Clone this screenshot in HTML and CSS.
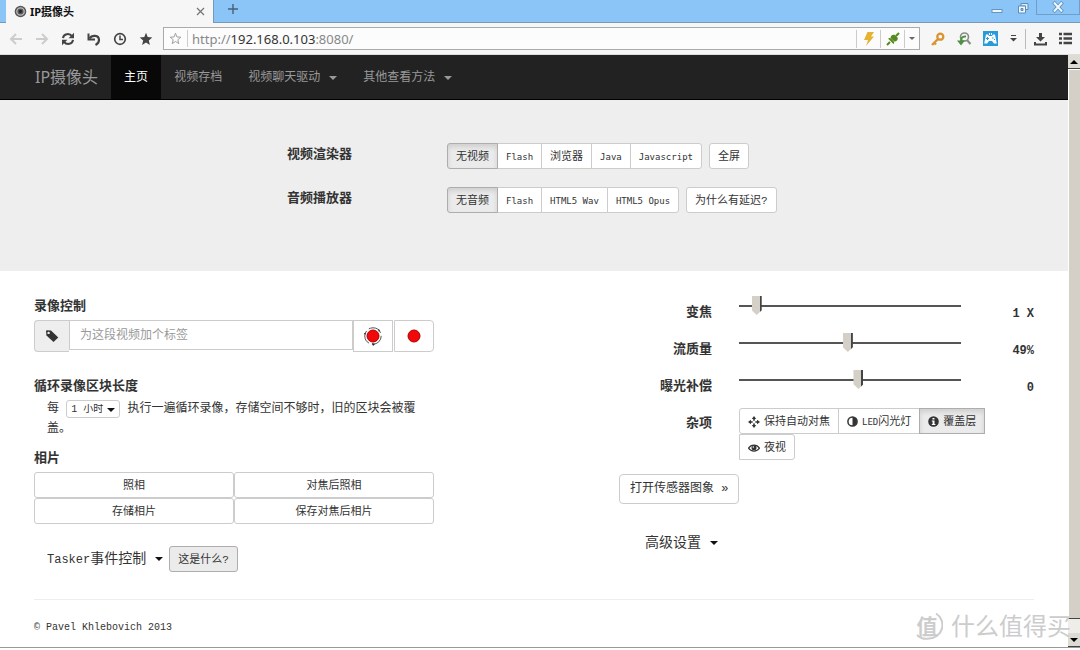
FILE: index.html
```html
<!DOCTYPE html>
<html lang="zh-CN">
<head>
<meta charset="utf-8">
<title>IP摄像头</title>
<link rel="stylesheet" href="styles.css">
</head>
<body>
<div class="tabbar">
  <div class="tab">
    <svg class="favicon" viewBox="0 0 14 14"><circle cx="7" cy="7" r="6.2" fill="#555"/><circle cx="7" cy="7" r="4" fill="none" stroke="#bbb" stroke-width="1.4"/><circle cx="7" cy="7" r="1.6" fill="#222"/></svg>
    <span class="tab-title">IP摄像头</span>
    <button class="plain" aria-label="关闭标签"><svg width="9" height="9" viewBox="0 0 9 9"><path d="M1 1l7 7M8 1L1 8" stroke="#777" stroke-width="1.3"/></svg></button>
  </div>
  <button class="plain newtab" aria-label="新标签"><svg width="10" height="10" viewBox="0 0 10 10"><path d="M5 0v10M0 5h10" stroke="#46607a" stroke-width="1.4"/></svg></button>
  <div class="window-controls">
    <button class="plain" aria-label="最小化"><svg width="12" height="12" viewBox="0 0 12 12"><rect x="1" y="7.5" width="10" height="3" fill="#eef7ff" stroke="#6894bb"/></svg></button>
    <button class="plain" aria-label="还原"><svg width="12" height="12" viewBox="0 0 12 12"><path d="M4 1.500h7v6H8.500V4H4z" fill="#d9edff" stroke="#5f8db6"/><path d="M1.500 4h7v7h-7z" fill="#eef7ff" stroke="#5f8db6"/><path d="M4 6.500h2v2H4z" fill="#8bc5f8" stroke="#5f8db6"/></svg></button>
    <button class="plain close" aria-label="关闭"><svg width="12" height="12" viewBox="0 0 12 12"><path d="M1.500 1l9 10M10.500 1l-9 10" stroke="#5f8db6" stroke-width="3.600"/><path d="M2 1.500l8 9M10 1.500l-8 9" stroke="#eef7ff" stroke-width="2"/></svg></button>
  </div>
</div>
<div class="toolbar">
  <div class="tools">
    <button class="plain" aria-label="后退"><svg width="14" height="14" viewBox="0 0 14 14"><path d="M13 7H3M7 2L2 7l5 5" fill="none" stroke="#ccc" stroke-width="2"/></svg></button>
    <button class="plain" aria-label="前进"><svg width="14" height="14" viewBox="0 0 14 14"><path d="M1 7h10M7 2l5 5-5 5" fill="none" stroke="#ccc" stroke-width="2"/></svg></button>
    <button class="plain" aria-label="刷新"><svg width="14" height="14" viewBox="0 0 14 14"><path d="M2 6.200C2.500 1.500 8.500.800 11 4.200M12 7.800C11.500 12.500 5.500 13.200 3 9.800" fill="none" stroke="#444" stroke-width="2"/><path d="M13 .800v5.400H7.600zM1 13.200V7.800h5.400z" fill="#444"/></svg></button>
    <button class="plain" aria-label="撤销"><svg width="14" height="14" viewBox="0 0 14 14"><path d="M2.500 6.500C5 2.500 12 3 12 8c0 2.500-1.500 4-3.500 5" fill="none" stroke="#444" stroke-width="2.200"/><path d="M1.500 1.500v6H8" fill="none" stroke="#444" stroke-width="2"/></svg></button>
    <button class="plain" aria-label="历史"><svg width="14" height="14" viewBox="0 0 14 14"><circle cx="7" cy="7" r="5.300" fill="none" stroke="#444" stroke-width="1.700"/><path d="M7 3.500V7.500h3" fill="none" stroke="#444" stroke-width="1.500"/></svg></button>
    <button class="plain" aria-label="书签"><svg width="14" height="14" viewBox="0 0 14 14"><path d="M7 .800l1.700 4.300 4.600.300-3.500 3 1.100 4.600L7 10.500 3.100 13l1.100-4.600-3.500-3 4.600-.300z" fill="#444"/></svg></button>
  </div>
  <div class="address">
    <button class="plain star" aria-label="收藏"><svg width="13" height="13" viewBox="0 0 14 14"><path d="M7 1.300l1.500 4 4.300.300-3.300 2.700 1.100 4.200L7 10.200l-3.600 2.300 1.100-4.200-3.300-2.700 4.300-.300z" fill="none" stroke="#999"/></svg></button>
    <span class="url">http://<b>192.168.0.103</b>:8080/</span>
    <button class="plain cell" aria-label="极速模式"><svg width="12" height="14" viewBox="0 0 12 14"><path d="M4.500 0H11L8 4.500h3L3 14l2-6H1z" fill="#e5b331"/></svg></button>
    <button class="plain cell" aria-label="插件"><svg width="14" height="14" viewBox="0 0 14 14"><path d="M1 13l3-3M10 4l3-3" stroke="#548a1e" stroke-width="2"/><path d="M2 6.500l5.500 5.500C9 10.500 8 9.500 6.500 8S4 5 2 6.500zM4.500 6C4.500 3 7.500 2 9 3l2.500 2.500C12.500 7 11 9.500 8.500 9.500z" fill="#548a1e"/></svg></button>
    <button class="plain cell narrow" aria-label="更多"><i class="caret grey"></i></button>
  </div>
  <div class="addons">
    <button class="plain" aria-label="密码"><svg width="14" height="14" viewBox="0 0 14 14"><circle cx="9.300" cy="4.700" r="3" fill="none" stroke="#d9932f" stroke-width="2.300"/><path d="M7 7l-6 6M3 10.500l2 2" stroke="#d9932f" stroke-width="2.300"/></svg></button>
    <button class="plain" aria-label="搜索"><svg width="14" height="14" viewBox="0 0 14 14"><circle cx="7.500" cy="5" r="4" fill="none" stroke="#8a8a8a" stroke-width="1.600"/><path d="M10 8l3.500 4" stroke="#8a8a8a" stroke-width="2"/><path d="M9 4.500C4.500 4 4 7 4 9" fill="none" stroke="#4a9440" stroke-width="2"/><path d="M0 8.500h8L4 13.500z" fill="#4a9440"/></svg></button>
    <button class="plain" aria-label="游戏"><svg width="15" height="15" viewBox="0 0 15 15"><path d="M0 0h15v15H0z" fill="#299bdb"/><path d="M3 3.500h2l1 1.500h3l1-1.500h2l1.800 9H11L9 10H6l-2 2.500H1.200zM6 2h1v2H6zM8 2h1v2H8z" fill="#fff"/><path d="M3 7.500h3M4.500 6v3M9 7h1.500M11 8.500h1" stroke="#299bdb"/></svg></button>
    <button class="plain" aria-label="展开"><svg width="7" height="7" viewBox="0 0 7 7"><path d="M1 .500h5" stroke="#444"/><path d="M0 3h7L3.500 6.500z" fill="#444"/></svg></button>
    <span class="divider"></span>
    <button class="plain" aria-label="下载"><svg width="13" height="14" viewBox="0 0 13 14"><path d="M5 1h3v4h3L6.500 9.500 2 5h3zM0 10h2v1.500h9V10h2v3.500H0z" fill="#444"/></svg></button>
    <button class="plain" aria-label="菜单"><svg width="13" height="13" viewBox="0 0 13 13"><path d="M0 2h3M4.500 2H13M0 6.500h3M4.500 6.500H13M0 11h3M4.500 11H13" stroke="#444" stroke-width="2.400"/></svg></button>
  </div>
</div>

<div class="viewport">
  <div class="page">
    <nav class="navbar">
      <a class="brand" href="#">IP摄像头</a>
      <a class="active" href="#">主页</a>
      <a href="#">视频存档</a>
      <a href="#">视频聊天驱动<i class="caret"></i></a>
      <a href="#">其他查看方法<i class="caret"></i></a>
    </nav>

    <section class="jumbo">
      <div class="jumbo-row">
        <span class="label" id="vr">视频渲染器</span>
        <div class="buttons" role="group" aria-labelledby="vr">
          <div class="group"><button class="btn on">无视频</button><button class="btn latin">Flash</button><button class="btn">浏览器</button><button class="btn latin">Java</button><button class="btn latin">Javascript</button></div>
          <button class="btn">全屏</button>
        </div>
      </div>
      <div class="jumbo-row">
        <span class="label" id="ap">音频播放器</span>
        <div class="buttons" role="group" aria-labelledby="ap">
          <div class="group"><button class="btn on">无音频</button><button class="btn latin">Flash</button><button class="btn latin">HTML5 Wav</button><button class="btn latin">HTML5 Opus</button></div>
          <button class="btn">为什么有延迟?</button>
        </div>
      </div>
    </section>

    <main class="content">
      <section class="left">
        <label class="label" for="tag">录像控制</label>
        <div class="record">
          <span class="addon"><svg width="14" height="14" viewBox="0 0 14 14"><path d="M1 2l.500 4.500L8.500 13l4.800-4.500L6 1.500 1.500 1.300z" fill="#333"/><circle cx="3.600" cy="3.900" r="1.200" fill="#eee"/></svg></span>
          <input id="tag" type="text" placeholder="为这段视频加个标签">
          <button class="btn rec" aria-label="循环录像"><svg width="20" height="20" viewBox="0 0 20 20"><circle cx="10" cy="10" r="8.200" fill="none" stroke="#555" stroke-dasharray="14 3"/><circle cx="10" cy="10" r="6" fill="#f20808" stroke="#a00"/><path d="M1 7l2 0-1 2zM15 3l2 1-1 2zM9 17l3 1-2 2z" fill="#222"/></svg></button>
          <button class="btn rec last" aria-label="录像"><svg width="20" height="20" viewBox="0 0 20 20"><circle cx="10" cy="10" r="6" fill="#f20808" stroke="#a00"/></svg></button>
        </div>
        <label class="label loop-title" for="len">循环录像区块长度</label>
        <p class="loop">每 <span class="select"><select id="len"><option>1 小时</option></select><i class="caret dark"></i></span> 执行一遍循环录像，存储空间不够时，旧的区块会被覆盖。</p>
        <h2 class="label">相片</h2>
        <div class="photos">
          <button class="btn">照相</button><button class="btn">对焦后照相</button>
          <button class="btn">存储相片</button><button class="btn">保存对焦后相片</button>
        </div>
        <div class="tasker">
          <button class="plain drop"><span><span class="tasker-name">Tasker</span>事件控制</span><i class="caret dark"></i></button>
          <button class="btn on flat">这是什么?</button>
        </div>
      </section>

      <section class="right">
        <div class="slider-row"><label class="label" for="zoom">变焦</label><input id="zoom" type="range" value="6"><output class="value" for="zoom">1 X</output></div>
        <div class="slider-row"><label class="label" for="quality">流质量</label><input id="quality" type="range" value="49"><output class="value" for="quality">49%</output></div>
        <div class="slider-row"><label class="label" for="exposure">曝光补偿</label><input id="exposure" type="range" value="54"><output class="value" for="exposure">0</output></div>
        <div class="misc-row">
          <span class="label" id="misc">杂项</span>
          <div class="group misc" role="group" aria-labelledby="misc">
            <button class="btn icon-btn"><svg width="12" height="12" viewBox="0 0 12 12"><path d="M6 0l2.200 3H6.800v2.200H9V3.800L12 6 9 8.200V6.800H6.800V9h1.400L6 12 3.800 9h1.400V6.800H3v1.400L0 6l3-2.200v1.400h2.200V3H3.800z" fill="#333"/><circle cx="6" cy="6" r="1.500" fill="#fff"/></svg>保持自动对焦</button>
            <button class="btn icon-btn"><svg width="11" height="11" viewBox="0 0 11 11"><circle cx="5.500" cy="5.500" r="4.600" fill="#fff" stroke="#333" stroke-width="1.500"/><path d="M5.500 1a4.500 4.500 0 010 9z" fill="#333"/></svg><span><span class="latin">LED</span>闪光灯</span></button>
            <button class="btn icon-btn on"><svg width="11" height="11" viewBox="0 0 11 11"><circle cx="5.500" cy="5.500" r="5.300" fill="#333"/><path d="M4.500 2h2v1.600h-2zM3.800 4.500h2.700V8h.900v1H3.800V8h.800V5.400h-.800z" fill="#fff"/></svg>覆盖层</button>
            <button class="btn icon-btn night"><svg width="12" height="10" viewBox="0 0 12 10"><path d="M.500 5.200C3 1 9 1 11.500 5.200 9 9 3 9 .500 5.200z" fill="#fff" stroke="#333" stroke-width="1.200"/><circle cx="6" cy="4.700" r="2.500" fill="#333"/><circle cx="5.300" cy="4" r=".800" fill="#fff"/></svg>夜视</button>
          </div>
        </div>
        <button class="btn sensor">打开传感器图象 »</button>
        <button class="plain drop advanced"><span>高级设置</span><i class="caret dark"></i></button>
      </section>
    </main>
    <footer class="footer">© Pavel Khlebovich 2013</footer>
  </div>
  <div class="scrollbar">
    <span class="arrow up"></span>
    <span class="thumb"></span>
    <span class="arrow down"></span>
  </div>
</div>
<div class="watermark">
  <div class="seal">
    <svg width="32" height="32" viewBox="0 0 32 32"><path d="M25 4.500A13.500 13.500 0 0118 29.500Q11 31 6 26" fill="none" stroke="#ccc" stroke-width="2"/></svg>
    <span class="mark">值</span>
  </div>
  <span>什么值得买</span>
</div>
</body>
</html>
```

FILE: styles.css
```css
* { box-sizing: border-box; }

body {
  margin: 0;
  min-height: 100vh;
  display: flex;
  flex-direction: column;
  background: #fff;
  color: #333;
  font: 12px/20px "Liberation Mono", "Noto Sans CJK SC", monospace;
  position: relative;
}

button, input, select { font-family: inherit; color: inherit; }
svg { display: block; flex: none; }
a { text-decoration: none; }

.plain {
  display: flex;
  align-items: center;
  justify-content: center;
  padding: 0;
  border: 0;
  background: none;
}

/* Browser window */
.tabbar {
  display: flex;
  height: 23px;
  padding-left: 6px;
  background: #8bc5f8;
  box-shadow: inset 0 -1px #7899b5;
}
.tab {
  display: flex;
  align-items: center;
  gap: 3px;
  width: 208px;
  padding: 0 8px;
  background: #f6f6f6;
  border-right: 1px solid #7899b5;
}
.favicon { width: 13px; height: 13px; }
.tab-title {
  flex: 1;
  color: #111;
  font: bold 11px/22px "Noto Sans", "Noto Sans CJK SC", sans-serif;
}
.newtab { width: 38px; height: 18px; }
.window-controls {
  display: flex;
  align-items: flex-start;
  margin-left: auto;
}
.window-controls .plain { width: 26px; height: 15px; }
.window-controls .close {
  width: 44px;
  border: 1px solid #6f9fc8;
  border-top: 0;
}

.toolbar {
  display: flex;
  align-items: center;
  height: 32px;
  background: #f6f6f6;
  border-bottom: 1px solid #ddd;
}
.tools {
  display: flex;
  gap: 12px;
  padding: 0 10px 0 9px;
}
.address {
  flex: 1;
  display: flex;
  align-items: center;
  height: 23px;
  background: #fcfcfc;
  border: 1px solid #aaa;
}
.star {
  width: 24px;
  height: 17px;
  border-right: 1px solid #ccc;
}
.url {
  flex: 1;
  padding-left: 4px;
  color: #888;
  font: 13px/20px "Noto Sans", sans-serif;
}
.url b { color: #333; font-weight: normal; }
.cell {
  width: 24px;
  height: 18px;
  border-left: 1px solid #ccc;
}
.cell.narrow { width: 15px; }
.addons {
  display: flex;
  align-items: center;
  gap: 12px;
  padding: 0 8px 0 11px;
}
.divider { width: 1px; height: 20px; margin: 0 -4px; background: #bbb; }

.caret {
  display: inline-block;
  border: 4px solid transparent;
  border-top-color: #999;
  border-bottom: 0;
}
.caret.grey { border-width: 3px 3px 0; border-top-color: #666; }
.caret.dark { border-top-color: #111; }

/* Page area */
.viewport { flex: 1; display: flex; border-bottom: 1px solid #999; margin-bottom: 2px; }
.page { flex: 1; min-width: 0; }

.navbar {
  display: flex;
  height: 45px;
  padding-left: 21px;
  background: #222;
  border-bottom: 1px solid #000;
}
.navbar a {
  display: flex;
  align-items: center;
  gap: 9px;
  padding: 2px 13px 0;
  color: #999;
}
.navbar .brand { padding: 0 13px 0 14px; font: 16px/20px "Noto Sans", "Noto Sans CJK SC", sans-serif; }
.navbar .active { background: #080808; color: #fff; }

.jumbo {
  display: grid;
  gap: 18px;
  padding: 43px 34px 58px;
  background: #eee;
}
.jumbo-row {
  display: grid;
  grid-template-columns: 32% 1fr;
  gap: 93px;
}
.jumbo-row .label { text-align: right; line-height: 24px; padding-right: 2px; }
.buttons { display: flex; gap: 7px; }
.group { display: flex; }

.label {
  display: block;
  margin: 0;
  font-size: 13px;
  line-height: 20px;
  font-weight: bold;
}

.btn {
  height: 26px;
  padding: 1px 8px 0;
  background: #fff;
  border: 1px solid #ccc;
  border-radius: 3px;
  font-size: 11px;
  line-height: 16px;
  white-space: nowrap;
}
.latin { font-family: "DejaVu Sans Mono", monospace; font-size: 9px; }
.btn.on {
  background: #ebebeb;
  border-color: #adadad;
  box-shadow: inset 0 3px 5px rgba(0, 0, 0, 0.12);
  z-index: 1;
}
.btn.flat { box-shadow: none; }
.group .btn { border-radius: 0; }
.group .btn + .btn { margin-left: -1px; }
.group .btn:first-child { border-radius: 3px 0 0 3px; }
.group .btn:last-child { border-radius: 0 3px 3px 0; }

.content {
  display: grid;
  grid-template-columns: 40% 1fr;
  column-gap: 185px;
  margin: 0 34px;
  padding: 26px 0 27px;
  border-bottom: 1px solid #eee;
}

.record {
  display: flex;
  align-items: flex-start;
  margin-top: 3px;
}
.addon {
  display: flex;
  align-items: center;
  justify-content: center;
  width: 35px;
  height: 32px;
  background: #eee;
  border: 1px solid #ccc;
  border-right: 0;
  border-radius: 4px 0 0 4px;
}
.record input {
  flex: 1;
  min-width: 0;
  height: 30px;
  padding: 1px 10px 0;
  background: #fff;
  border: 1px solid #ccc;
  font-size: 12px;
}
.record input::placeholder { color: #999; opacity: 1; }
.rec {
  display: flex;
  align-items: center;
  justify-content: center;
  width: 40px;
  height: 32px;
  padding: 0;
  border-radius: 0;
}
.rec.last { margin-left: 1px; border-radius: 0 4px 4px 0; }

.loop-title { margin-top: 25px; }
.loop { margin: 2px 0 10px; padding: 0 0 0 13px; }
.select { display: inline-block; position: relative; vertical-align: middle; }
.select select {
  display: block;
  appearance: none;
  width: 54px;
  height: 18px;
  padding: 1px 4px 0;
  background: #fff;
  border: 1px solid #ccc;
  border-radius: 3px;
  font-size: 10px;
}
.select .caret { position: absolute; right: 5px; top: 8px; pointer-events: none; }
.photos {
  display: grid;
  grid-template-columns: 1fr 1fr;
  margin-top: 3px;
}
.tasker {
  display: flex;
  align-items: center;
  gap: 6px;
  margin-top: 22px;
  padding-left: 13px;
}
.drop { gap: 9px; font-size: 14px; line-height: 20px; }
.tasker-name { font-size: 12px; }

.slider-row {
  display: grid;
  grid-template-columns: 93px 1fr 46px;
  column-gap: 27px;
  height: 37px;
}
.slider-row .label, .misc-row .label { text-align: right; padding-top: 6px; }
.slider-row input {
  appearance: none;
  width: 100%;
  height: 18px;
  margin: 0;
  background: none;
}
.slider-row input::-webkit-slider-runnable-track {
  height: 2px;
  background: #555;
}
.slider-row input::-webkit-slider-thumb {
  appearance: none;
  width: 10px;
  height: 19px;
  margin-top: -9px;
  background: linear-gradient(90deg, #d4d0c8 80%, #444 80%);
  clip-path: polygon(0 0, 100% 0, 100% 75%, 50% 100%, 0 75%);
}
.value {
  padding-top: 7px;
  text-align: right;
  font-size: 12px;
  font-weight: bold;
}
.misc-row {
  display: grid;
  grid-template-columns: 93px 1fr;
  column-gap: 27px;
}
.misc { flex-wrap: wrap; }
.icon-btn { display: flex; align-items: center; gap: 4px; }
.group .night.btn { margin-left: 0; }
.sensor {
  display: block;
  height: 30px;
  margin-top: 14px;
  padding: 0 10px;
  border-radius: 4px;
  font-size: 12px;
}
.advanced { margin: 29px 0 0 26px; }

.footer {
  margin: 0 34px;
  padding: 18px 0 7px;
  font-size: 10px;
}

.scrollbar {
  display: flex;
  flex-direction: column;
  width: 12px;
  background: #efedea;
}
.arrow {
  display: flex;
  align-items: center;
  justify-content: center;
  height: 14px;
  background: #dedbd4;
  border-bottom: 1px solid #444;
}
.arrow::before { content: ""; border: 4px solid transparent; }
.up::before { border-bottom-color: #000; border-top: 0; }
.down::before { border-top-color: #000; border-bottom: 0; }
.thumb {
  flex: 1;
  margin-bottom: 14px;
  background: #d4d0c8;
  border-left: 1px solid #fff;
  border-top: 1px solid #fff;
  border-bottom: 1px solid #444;
}

.watermark {
  position: absolute;
  right: 9px;
  bottom: 8px;
  display: flex;
  align-items: center;
  gap: 8px;
  color: #ccc;
  font: 24px/34px "Noto Sans CJK SC", sans-serif;
  pointer-events: none;
}
.seal { display: grid; place-items: center; }
.seal > * { grid-area: 1 / 1; }
.mark { font-size: 21px; font-weight: bold; line-height: 32px; }
```
